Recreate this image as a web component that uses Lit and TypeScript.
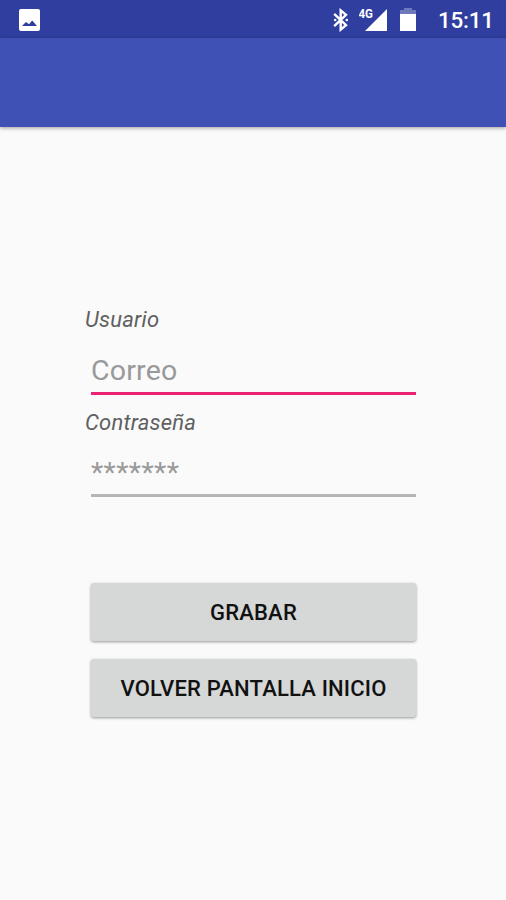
import { LitElement, html, css } from "lit";
import { customElement } from "lit/decorators.js";

@customElement("status-bar")
class StatusBar extends LitElement {
  static styles = css`
    :host { display: flex; align-items: flex-start; height: 38px; background: #303f9f; color: #fff; }
    svg { display: block; flex: none; fill: #fff; }
    .picture { margin: 9px 0 0 19px; }
    .spacer { flex: 1; }
    .bluetooth { margin: 8px 9px 0 0; }
    .signal { margin: 8px 12px 0 0; }
    .battery { margin: 8px 22px 0 0; }
    .net { font: 700 12px Roboto, sans-serif; }
    .faded { opacity: 0.3; }
    .time { width: 55px; text-align: right; font: 500 22.4px/26px Roboto, sans-serif; letter-spacing: -0.2px; margin: 7px 13px 0 0; white-space: nowrap; }
  `;
  render() {
    return html`
      <svg class="picture" width="21" height="22" viewBox="0 0 21 22">
        <path fill-rule="evenodd" d="M2 0H19Q21 0 21 2V20Q21 22 19 22H2Q0 22 0 20V2Q0 0 2 0ZM3 17H18L13.2 11.5L10 15.3L7 13Z" />
      </svg>
      <span class="spacer"></span>
      <svg class="bluetooth" width="18" height="24" viewBox="0 0 18 24">
        <path
          fill="none"
          stroke="#fff"
          stroke-width="2.4"
          d="M2.2 5.8L14 17.2L8.7 21.6V2.4L14 6.8L2.2 18.2"
        />
        <circle cx="3.2" cy="12" r="1.3" /><circle cx="14.8" cy="12" r="1.3" />
      </svg>
      <svg class="signal" width="29" height="24" viewBox="0 0 29 24">
        <path d="M28 1V23H6Z" />
        <text class="net" x="-0.6" y="10.2" textLength="14.5" lengthAdjust="spacingAndGlyphs">4G</text>
      </svg>
      <svg class="battery" width="16" height="24" viewBox="0 0 16 24">
        <path class="faded" d="M4 0H12V2H16V6H0V2H4Z" />
        <path d="M0 6H16V23H0Z" />
      </svg>
      <span class="time">15:11</span>
    `;
  }
}

@customElement("app-root")
class AppRoot extends LitElement {
  static styles = css`
    :host {
      display: flex;
      flex-direction: column;
      height: 900px;
      background: #fafafa;
      font-family: Roboto, sans-serif;
    }
    status-bar { flex: none; }
    .toolbar { flex: none; height: 89px; background: #3f51b5; box-shadow: 0 1px 4px rgba(0, 0, 0, 0.38); }
    .form { display: flex; flex-direction: column; padding: 180px 90px 0 85px; }
    .label { font-size: 22px; line-height: 26px; letter-spacing: 0.22px; font-style: italic; color: #606060; }
    .field {
      box-sizing: border-box;
      height: 41px;
      margin: 21px 0 0 6px;
      font-size: 28.5px;
      line-height: 34px;
      letter-spacing: 0.2px;
      color: #999;
      border-bottom: 3px solid #b5b5b5;
    }
    .focused { border-bottom-color: #ec2370; margin-bottom: 15px; }
    .password { margin-top: 20px; letter-spacing: 0.35px; }
    .actions { display: flex; flex-direction: column; gap: 18px; margin: 86px 0 0 6px; }
    .button {
      box-sizing: border-box;
      height: 58px;
      border: 0;
      padding: 2px 0 0;
      border-radius: 3px;
      background: #d6d7d7;
      color: #111;
      font: 500 22px/56px Roboto, sans-serif;
      letter-spacing: 0.18px;
      box-shadow: 0 1px 3px rgba(0, 0, 0, 0.4);
    }
  `;
  render() {
    return html`
      <status-bar></status-bar>
      <div class="toolbar"></div>
      <div class="form">
        <div class="label">Usuario</div>
        <div class="field focused">Correo</div>
        <div class="label">Contraseña</div>
        <div class="field password">*******</div>
        <div class="actions">
          <button class="button">GRABAR</button>
          <button class="button">VOLVER PANTALLA INICIO</button>
        </div>
      </div>
    `;
  }
}
